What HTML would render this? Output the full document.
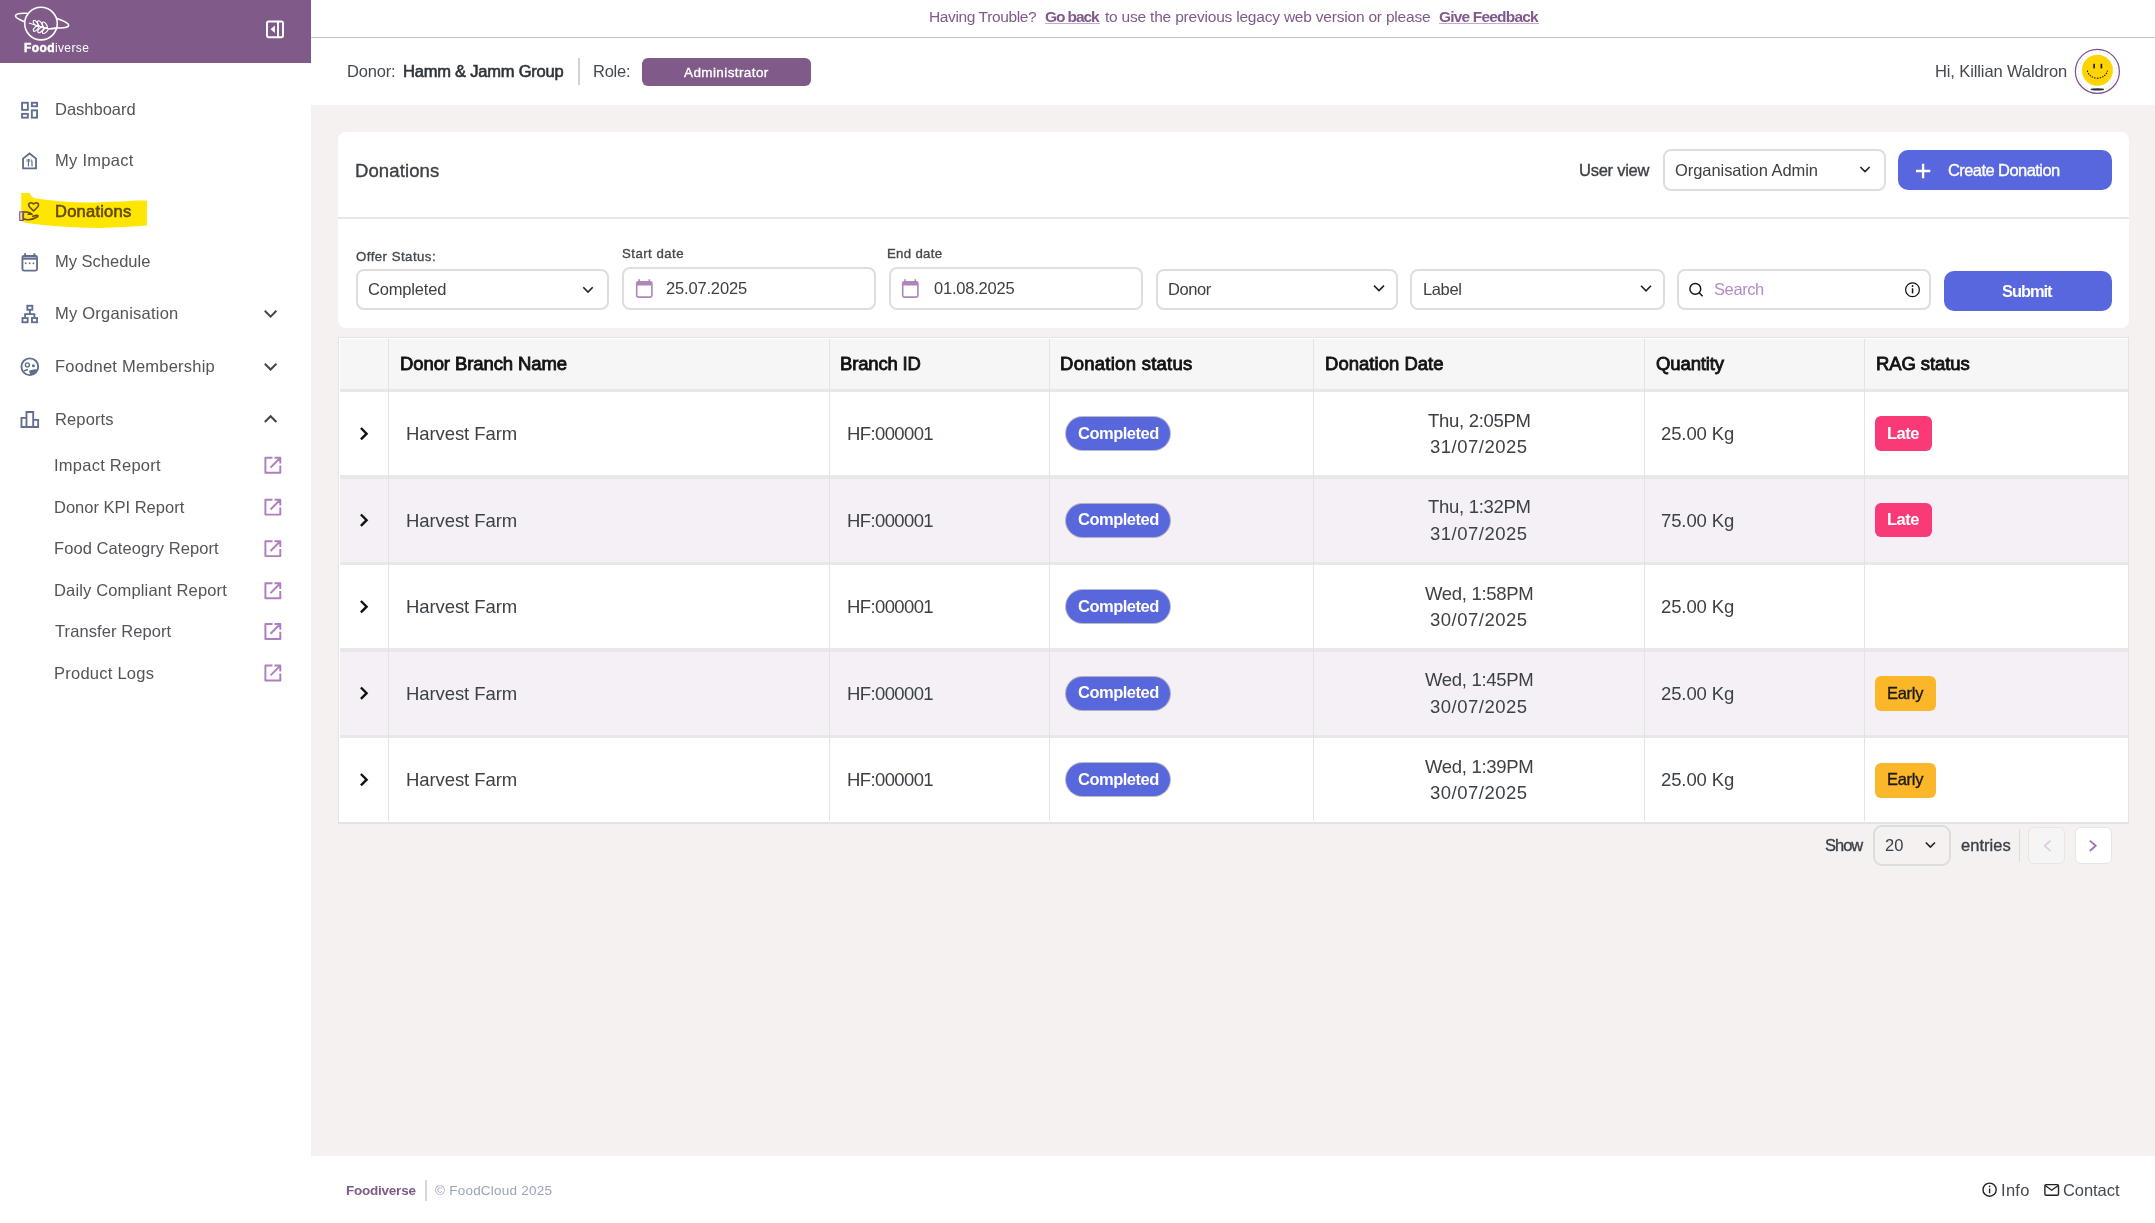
<!DOCTYPE html>
<html><head><meta charset="utf-8">
<style>
*{box-sizing:border-box;margin:0;padding:0}
html,body{width:2155px;height:1223px;overflow:hidden}
body{background:#f6f1f1;font-family:"Liberation Sans",sans-serif;color:#3c4146;position:relative}
.a{position:absolute}
.t{position:absolute;white-space:nowrap;will-change:transform}
.box{position:absolute;border:2px solid #dedede;border-radius:8px;background:#fff}
.btn{position:absolute;background:#5867dd;border-radius:10px}
.vl{position:absolute;width:1px;background:#e3e3e3}
.pill{position:absolute;width:104px;height:33px;border-radius:17px;margin:0.5px 0 0 0.5px;background:#5967dc;box-shadow:0 0 0 1px rgba(60,60,90,.35)}
.late{position:absolute;width:57px;height:34.5px;border-radius:6px;background:#f93a77}
.early{position:absolute;width:61.4px;height:35px;border-radius:6px;background:#fcb62a}
</style></head>
<body>
<!-- sidebar -->
<div class="a" style="left:0;top:0;width:311px;height:1223px;background:#fff"></div>
<div class="a" style="left:0;top:0;width:311px;height:63.3px;background:#805a88"></div>
<!-- topbar -->
<div class="a" style="left:311px;top:0;width:1844px;height:105px;background:#fff"></div>
<div class="a" style="left:311px;top:36.6px;width:1844px;height:1.3px;background:#c4c4c4"></div>
<div class="a" style="left:577.5px;top:58px;width:2px;height:27px;background:#d2d2d2"></div>
<div class="a" style="left:642px;top:57.5px;width:169px;height:28px;border-radius:6px;background:#805a88"></div>
<!-- underlines announcement -->
<div class="a" style="left:1045px;top:23.4px;width:55px;height:1px;background:#c9a6d2"></div>
<div class="a" style="left:1439px;top:23.4px;width:99.5px;height:1px;background:#c9a6d2"></div>
<!-- footer -->
<div class="a" style="left:311px;top:1156.3px;width:1844px;height:67px;background:#fff"></div>
<div class="a" style="left:425px;top:1180px;width:1.5px;height:20.5px;background:#d8d8d8"></div>
<!-- card -->
<div class="a" style="left:338px;top:132px;width:1791px;height:196px;border-radius:8px;background:#fff"></div>
<div class="a" style="left:338px;top:216.8px;width:1791px;height:1.8px;background:#e6e6e6"></div>
<div class="box" style="left:1662.6px;top:149.4px;width:223.4px;height:41.6px"></div>
<div class="btn" style="left:1898px;top:150.4px;width:213.7px;height:39.6px"></div>
<div class="box" style="left:355.6px;top:268.9px;width:253.4px;height:41.6px"></div>
<div class="box" style="left:622px;top:266.7px;width:254.2px;height:43.8px"></div>
<div class="box" style="left:889px;top:266.8px;width:254px;height:43.7px"></div>
<div class="box" style="left:1155.6px;top:268.7px;width:242.2px;height:41.8px"></div>
<div class="box" style="left:1410.3px;top:268.7px;width:254.5px;height:41.8px"></div>
<div class="box" style="left:1677px;top:268.7px;width:254px;height:41.6px"></div>
<div class="btn" style="left:1943.5px;top:271px;width:168.2px;height:39.7px"></div>
<!-- table -->
<div class="a" style="left:338px;top:337px;width:1791px;height:487px;background:#fff;border:1.5px solid #e3e3e3;border-bottom-width:2.5px"></div>
<div class="a" style="left:339.5px;top:338.5px;width:1788px;height:50px;background:#f6f6f6"></div>
<div class="a" style="left:339.5px;top:388.5px;width:1788px;height:3px;background:#e7e7e7"></div>
<div class="a" style="left:339.5px;top:479.2px;width:1788px;height:83.5px;background:#f5f0f6"></div>
<div class="a" style="left:339.5px;top:652.2px;width:1788px;height:83.5px;background:#f5f0f6"></div>
<div class="a" style="left:339.5px;top:475.4px;width:1788px;height:3.6px;background:#e8e8e8"></div>
<div class="a" style="left:339.5px;top:561.9px;width:1788px;height:3.6px;background:#e8e8e8"></div>
<div class="a" style="left:339.5px;top:648.4px;width:1788px;height:3.6px;background:#e8e8e8"></div>
<div class="a" style="left:339.5px;top:734.9px;width:1788px;height:3.6px;background:#e8e8e8"></div>
<div class="vl" style="left:388px;top:338.5px;height:482px"></div>
<div class="vl" style="left:829px;top:338.5px;height:482px"></div>
<div class="vl" style="left:1049px;top:338.5px;height:482px"></div>
<div class="vl" style="left:1313px;top:338.5px;height:482px"></div>
<div class="vl" style="left:1644px;top:338.5px;height:482px"></div>
<div class="vl" style="left:1864px;top:338.5px;height:482px"></div>
<!-- pills -->
<div class="pill" style="left:1065.6px;top:416.5px"></div>
<div class="pill" style="left:1065.6px;top:503px"></div>
<div class="pill" style="left:1065.6px;top:589.5px"></div>
<div class="pill" style="left:1065.6px;top:676px"></div>
<div class="pill" style="left:1065.6px;top:762.5px"></div>
<div class="late" style="left:1874.8px;top:416.4px"></div>
<div class="late" style="left:1874.8px;top:502.9px"></div>
<div class="early" style="left:1874.8px;top:676px"></div>
<div class="early" style="left:1874.8px;top:762.6px"></div>
<!-- pagination -->
<div class="a" style="left:1873.3px;top:825.2px;width:78px;height:41px;border:2.2px solid #dcdcdc;border-radius:9px"></div>
<div class="a" style="left:2019.3px;top:829px;width:1px;height:33px;background:#dddddd"></div>
<div class="a" style="left:2028.3px;top:827px;width:37px;height:36.6px;border:1px solid #e6e6e6;border-radius:6px;background:#f5f5f5"></div>
<div class="a" style="left:2074.6px;top:827px;width:37px;height:36.6px;border:1px solid #e6e6e6;border-radius:6px;background:#fff"></div>
<!-- highlight + icons -->
<svg class="a" style="left:0;top:0" width="2155" height="1223" viewBox="0 0 2155 1223">
<!-- highlight -->
<path d="M21.2 193.1 L29.6 193.1 Q31 197.5 35.8 198.6 Q48 200.5 60.5 201.2 Q80 202.9 99.5 202.2 Q125.5 201.6 135.2 200.6 L146.9 200.6 L146.9 225.6 Q125.5 227.2 100 227.9 Q80 227.9 60.5 226.6 Q34.5 224 25.4 222.7 Q21.2 221.5 21.2 220 Z" fill="#ffe600"/>
<!-- logo -->
<g fill="none" stroke="#fff" stroke-width="1.6">
<ellipse cx="42.1" cy="20.6" rx="27" ry="5.6" transform="rotate(10.5 42.1 20.6)"/>
</g>
<circle cx="41" cy="23.6" r="16.3" fill="#805a88" stroke="#fff" stroke-width="1.6"/>
<path d="M48.5 29 Q53 28.6 57.5 27.9" fill="none" stroke="#fff" stroke-width="1.6"/>
<g fill="none" stroke="#fff" stroke-width="1.1">
<path d="M28.9 23.1 Q36 25.5 49.3 29"/>
<ellipse cx="35.6" cy="23.3" rx="3.4" ry="1.6" transform="rotate(55 35.6 23.3)"/>
<ellipse cx="40" cy="24" rx="3.6" ry="1.7" transform="rotate(55 40 24)"/>
<ellipse cx="44.7" cy="25.2" rx="3.6" ry="1.8" transform="rotate(55 44.7 25.2)"/>
<ellipse cx="36" cy="28.6" rx="3.4" ry="1.6" transform="rotate(-45 36 28.6)"/>
<ellipse cx="40.6" cy="29.8" rx="3.6" ry="1.7" transform="rotate(-45 40.6 29.8)"/>
<ellipse cx="45.2" cy="30.6" rx="3.6" ry="1.7" transform="rotate(-45 45.2 30.6)"/>
</g>
<!-- collapse icon -->
<g fill="none" stroke="#fff" stroke-width="1.95">
<rect x="267" y="21.4" width="16" height="15.8" rx="1.6"/>
<path d="M278 21.4 V37.2"/>
</g>
<path d="M270.6 29.3 L274.9 25.6 L274.9 33 Z" fill="#fff"/>
<!-- nav icons slate -->
<g fill="none" stroke="#5f6e8c" stroke-width="1.85">
<!-- dashboard -->
<rect x="22.05" y="102.75" width="5.8" height="7.1"/>
<rect x="31.85" y="102.75" width="5.2" height="3.5"/>
<rect x="22.05" y="113.85" width="5.8" height="3.8"/>
<rect x="31.85" y="110.35" width="5.2" height="7.3"/>
<!-- house -->
<path d="M23.05 168.35 V158.6 L29.55 153.5 L36.05 158.6 V168.35 Z"/>
<!-- calendar -->
<rect x="22.45" y="255.95" width="14.6" height="14.6" rx="1.5"/>
<path d="M22.45 258.6 H37.05" stroke-width="2.2"/>
<path d="M25.1 253.2 V256 M34.4 253.2 V256"/>
<!-- org -->
<rect x="27.35" y="305.75" width="5" height="4"/>
<path d="M29.85 309.75 V314.1 M25.1 317.2 V314.1 H34.4 V317.2"/>
<rect x="22.45" y="318.05" width="5.2" height="4.2"/>
<rect x="31.95" y="318.05" width="5.1" height="4.2"/>
<!-- foodnet -->
<circle cx="29.8" cy="366.7" r="8.4"/>
<circle cx="27.4" cy="364.9" r="2" stroke-width="1.4"/>
<path d="M23.6 371.2 Q25.6 369.9 28 369.4" stroke-width="1.5"/>
<!-- reports -->
<path d="M21.45 427 V417.85 H26.5 V411.95 H33.2 V419.85 H38.15 V427 Z M26.5 417.85 V427 M33.2 419.85 V427"/>
</g>
<g fill="#5f6e8c">
<circle cx="33.4" cy="365.8" r="1.5"/>
<path d="M29 370.8 Q33 368.6 37.9 369.4 Q36.5 374.2 30.8 375.4 Q29.6 373.5 29 370.8 Z"/>
<rect x="27.85" y="159" width="1.2" height="7.4"/>
<rect x="26.6" y="159" width="0.8" height="3"/>
<rect x="29.4" y="159" width="0.8" height="3"/>
<path d="M31.2 159 Q33 160.5 32.6 163 L32.6 166.4 L31.5 166.4 Z"/>
<rect x="24.9" y="262.5" width="1.6" height="1.6"/>
<rect x="28.8" y="262.5" width="1.6" height="1.6"/>
<rect x="32.6" y="262.5" width="1.6" height="1.6"/>
</g>
<!-- donations hand icon -->
<g fill="none" stroke="#6b4a00" stroke-width="1.6" stroke-linejoin="round">
<path d="M33.6 211 L29.6 207 Q27.7 204.6 29.6 203.2 Q31.7 201.9 33.6 204 Q35.5 201.9 37.6 203.2 Q39.5 204.6 37.6 207 Z"/>
<path d="M23.3 212 H27 Q30.5 212.5 32 214.3 H27.5 M23.3 218.8 Q30 221.5 37.5 216.8 Q38.8 215.2 36.5 215.2 L32 216.5"/>
<path d="M23.3 211.5 V220"/>
</g>
<rect x="19.8" y="211.8" width="3.3" height="8.6" fill="none" stroke="#7a4fb0" stroke-width="1.2"/>
<!-- chevrons sidebar -->
<g fill="none" stroke="#454545" stroke-width="2">
<path d="M264.8 310.8 L270.6 316.6 L276.4 310.8"/>
<path d="M264.8 363.7 L270.6 369.5 L276.4 363.7"/>
<path d="M264.8 422 L270.6 416.2 L276.4 422"/>
</g>
<!-- external link icons -->
<g fill="none" stroke="#b07ec0" stroke-width="1.95" stroke-linejoin="round">
<path d="M272.5 457.8 H265.4 V472.7 H280.3 V465.6 M274.5 457.8 H280.3 V463.6 M280.3 457.8 L270.5 467.6" transform="translate(0,0)"/>
<path d="M272.5 457.8 H265.4 V472.7 H280.3 V465.6 M274.5 457.8 H280.3 V463.6 M280.3 457.8 L270.5 467.6" transform="translate(0,41.9)"/>
<path d="M272.5 457.8 H265.4 V472.7 H280.3 V465.6 M274.5 457.8 H280.3 V463.6 M280.3 457.8 L270.5 467.6" transform="translate(0,83.4)"/>
<path d="M272.5 457.8 H265.4 V472.7 H280.3 V465.6 M274.5 457.8 H280.3 V463.6 M280.3 457.8 L270.5 467.6" transform="translate(0,125.5)"/>
<path d="M272.5 457.8 H265.4 V472.7 H280.3 V465.6 M274.5 457.8 H280.3 V463.6 M280.3 457.8 L270.5 467.6" transform="translate(0,166.2)"/>
<path d="M272.5 457.8 H265.4 V472.7 H280.3 V465.6 M274.5 457.8 H280.3 V463.6 M280.3 457.8 L270.5 467.6" transform="translate(0,207.8)"/>
</g>
<!-- avatar -->
<circle cx="2097.4" cy="71.4" r="22" fill="#fff" stroke="#7b4e8a" stroke-width="1.2"/>
<circle cx="2097.4" cy="71.4" r="19.3" fill="none" stroke="#e6dcea" stroke-width="0.8" stroke-dasharray="2 2"/>
<circle cx="2097.4" cy="70.3" r="15.5" fill="#ffd400"/>
<ellipse cx="2097.4" cy="89.4" rx="6.8" ry="1.1" fill="#2a2f3a"/>
<g fill="#111"><rect x="2093.3" y="63.8" width="1.6" height="4.6"/><rect x="2100.6" y="63.8" width="1.6" height="4.6"/></g>
<path d="M2087.3 70.6 Q2089 77.5 2097.4 78.3 Q2105.8 77.5 2107.5 70.6" fill="none" stroke="#111" stroke-width="1.1" stroke-dasharray="1.4 1.2"/>
<!-- form chevrons -->
<g fill="none" stroke="#222" stroke-width="1.6">
<path d="M583.3 287.2 L588 292 L592.7 287.2"/>
<path d="M1374 285.6 L1379 290.6 L1384 285.6"/>
<path d="M1641 285.8 L1646 290.8 L1651 285.8"/>
<path d="M1860.4 167 L1865 171.6 L1869.6 167"/>
<path d="M1925.8 842.5 L1930.4 847.1 L1935 842.5"/>
</g>
<!-- calendar lavender -->
<g fill="none" stroke="#ae85ba" stroke-width="1.6">
<rect x="636.7" y="281.9" width="15.2" height="15.2" rx="1.6"/>
<rect x="902.7" y="281.9" width="15.2" height="15.2" rx="1.6"/>
<path d="M639.1 279.2 V282 M649.3 279.2 V282 M905.1 279.2 V282 M915.3 279.2 V282"/>
</g>
<g fill="#ae85ba"><rect x="636.7" y="281.9" width="15.2" height="3.6"/><rect x="902.7" y="281.9" width="15.2" height="3.6"/></g>
<!-- search & info -->
<g fill="none" stroke="#111" stroke-width="1.45">
<circle cx="1695.3" cy="288.9" r="5.4"/>
<path d="M1699.2 292.8 L1702.6 296.2"/>
<circle cx="1912.5" cy="289.7" r="6.9" stroke-width="1.2"/>
</g>
<g fill="#111"><rect x="1911.8" y="288.3" width="1.5" height="5"/><circle cx="1912.55" cy="286" r="0.9"/></g>
<!-- plus -->
<path d="M1923.1 163.8 V178.2 M1915.9 171 H1930.3" stroke="#fff" stroke-width="2.4" fill="none"/>
<!-- table chevrons -->
<g fill="none" stroke="#111" stroke-width="2.4">
<path d="M360.9 428 L366.6 433.7 L360.9 439.4"/>
<path d="M360.9 428 L366.6 433.7 L360.9 439.4" transform="translate(0,86.5)"/>
<path d="M360.9 428 L366.6 433.7 L360.9 439.4" transform="translate(0,173)"/>
<path d="M360.9 428 L366.6 433.7 L360.9 439.4" transform="translate(0,259.5)"/>
<path d="M360.9 428 L366.6 433.7 L360.9 439.4" transform="translate(0,346)"/>
</g>
<!-- pagination chevrons -->
<path d="M2050.5 840.6 L2044.6 845.8 L2050.5 851" fill="none" stroke="#dcc8e2" stroke-width="1.6"/>
<path d="M2089.8 840.6 L2095.7 845.8 L2089.8 851" fill="none" stroke="#a46fb5" stroke-width="1.8"/>
<!-- footer icons -->
<g fill="none" stroke="#222" stroke-width="1.4">
<circle cx="1989.6" cy="1189.7" r="6.6"/>
<rect x="2044.9" y="1184.6" width="13.6" height="10.6" rx="1.2"/>
<path d="M2045.2 1185.5 L2051.7 1190.2 L2058.2 1185.5"/>
</g>
<g fill="#222"><rect x="1988.9" y="1188.5" width="1.4" height="4.8"/><circle cx="1989.6" cy="1186.3" r="0.85"/></g>
</svg>

<div class="t" style="left:54.60px;top:100.97px;font-size:16.5px;line-height:16.5px;font-weight:400;color:#515459;letter-spacing:-0.012px">Dashboard</div>
<div class="t" style="left:54.60px;top:152.07px;font-size:16.5px;line-height:16.5px;font-weight:400;color:#515459;letter-spacing:0.275px">My Impact</div>
<div class="t" style="left:54.60px;top:202.78px;font-size:16.5px;line-height:16.5px;font-weight:400;-webkit-text-stroke:0.6px currentColor;color:#634900;letter-spacing:0.238px">Donations</div>
<div class="t" style="left:54.60px;top:253.08px;font-size:16.5px;line-height:16.5px;font-weight:400;color:#515459">My Schedule</div>
<div class="t" style="left:54.60px;top:304.98px;font-size:16.5px;line-height:16.5px;font-weight:400;color:#515459;letter-spacing:0.221px">My Organisation</div>
<div class="t" style="left:54.60px;top:357.58px;font-size:16.5px;line-height:16.5px;font-weight:400;color:#515459;letter-spacing:0.224px">Foodnet Membership</div>
<div class="t" style="left:54.60px;top:410.98px;font-size:16.5px;line-height:16.5px;font-weight:400;color:#515459;letter-spacing:0.133px">Reports</div>
<div class="t" style="left:54.00px;top:456.78px;font-size:16.5px;line-height:16.5px;font-weight:400;color:#515459;letter-spacing:0.250px">Impact Report</div>
<div class="t" style="left:54.00px;top:498.68px;font-size:16.5px;line-height:16.5px;font-weight:400;color:#515459">Donor KPI Report</div>
<div class="t" style="left:54.00px;top:540.18px;font-size:16.5px;line-height:16.5px;font-weight:400;color:#515459;letter-spacing:0.074px">Food Cateogry Report</div>
<div class="t" style="left:54.00px;top:582.27px;font-size:16.5px;line-height:16.5px;font-weight:400;color:#515459;letter-spacing:0.148px">Daily Compliant Report</div>
<div class="t" style="left:55.00px;top:622.98px;font-size:16.5px;line-height:16.5px;font-weight:400;color:#515459;letter-spacing:0.086px">Transfer Report</div>
<div class="t" style="left:54.00px;top:664.58px;font-size:16.5px;line-height:16.5px;font-weight:400;color:#515459;letter-spacing:0.245px">Product Logs</div>
<div class="t" style="left:24.00px;top:41.70px;font-size:12px;line-height:12px;font-weight:400;color:#fff;letter-spacing:0.389px"><b style="font-weight:700;-webkit-text-stroke:0.5px #fff">Food</b>iverse</div>
<div class="t" style="left:928.70px;top:9.13px;font-size:15.5px;line-height:15.5px;font-weight:400;color:#80598a;letter-spacing:-0.379px">Having Trouble?</div>
<div class="t" style="left:1045.20px;top:9.13px;font-size:15.5px;line-height:15.5px;font-weight:700;color:#80598a;letter-spacing:-1.083px">Go back</div>
<div class="t" style="left:1104.60px;top:9.13px;font-size:15.5px;line-height:15.5px;font-weight:400;color:#80598a;letter-spacing:-0.204px">to use the previous legacy web version or please</div>
<div class="t" style="left:1439.00px;top:9.13px;font-size:15.5px;line-height:15.5px;font-weight:700;color:#80598a;letter-spacing:-0.817px">Give Feedback</div>
<div class="t" style="left:346.80px;top:62.98px;font-size:16.5px;line-height:16.5px;font-weight:400;color:#44494e;letter-spacing:-0.200px">Donor:</div>
<div class="t" style="left:403.40px;top:62.98px;font-size:16.5px;line-height:16.5px;font-weight:400;-webkit-text-stroke:0.6px currentColor;color:#2f3337;letter-spacing:-0.219px">Hamm &amp; Jamm Group</div>
<div class="t" style="left:593.00px;top:62.98px;font-size:16.5px;line-height:16.5px;font-weight:400;color:#44494e;letter-spacing:-0.250px">Role:</div>
<div class="t" style="left:683.70px;top:66.03px;font-size:13.5px;line-height:13.5px;font-weight:400;-webkit-text-stroke:0.35px currentColor;color:#fff;letter-spacing:0.400px">Administrator</div>
<div class="t" style="left:1935.40px;top:63.27px;font-size:16.5px;line-height:16.5px;font-weight:400;color:#44494e;letter-spacing:-0.111px">Hi, Killian Waldron</div>
<div class="t" style="left:354.50px;top:162.08px;font-size:18.5px;line-height:18.5px;font-weight:400;-webkit-text-stroke:0.35px currentColor;color:#3c4146;letter-spacing:0.112px">Donations</div>
<div class="t" style="left:1579.00px;top:162.38px;font-size:16.5px;line-height:16.5px;font-weight:400;-webkit-text-stroke:0.35px currentColor;color:#3c4146;letter-spacing:-0.250px">User view</div>
<div class="t" style="left:1674.70px;top:162.38px;font-size:16.5px;line-height:16.5px;font-weight:400;color:#3c4146;letter-spacing:-0.059px">Organisation Admin</div>
<div class="t" style="left:1948.00px;top:162.38px;font-size:16.5px;line-height:16.5px;font-weight:400;-webkit-text-stroke:0.35px currentColor;color:#fff;letter-spacing:-0.571px">Create Donation</div>
<div class="t" style="left:355.60px;top:249.98px;font-size:13.2px;line-height:13.2px;font-weight:400;-webkit-text-stroke:0.35px currentColor;color:#44494e;letter-spacing:0.483px">Offer Status:</div>
<div class="t" style="left:622.00px;top:246.78px;font-size:13.2px;line-height:13.2px;font-weight:400;-webkit-text-stroke:0.35px currentColor;color:#44494e;letter-spacing:0.478px">Start date</div>
<div class="t" style="left:887.40px;top:246.88px;font-size:13.2px;line-height:13.2px;font-weight:400;-webkit-text-stroke:0.35px currentColor;color:#44494e;letter-spacing:0.314px">End date</div>
<div class="t" style="left:368.00px;top:280.88px;font-size:16.5px;line-height:16.5px;font-weight:400;color:#3c4146;letter-spacing:-0.175px">Completed</div>
<div class="t" style="left:666.00px;top:279.58px;font-size:16.5px;line-height:16.5px;font-weight:400;color:#3c4146;letter-spacing:-0.167px">25.07.2025</div>
<div class="t" style="left:933.50px;top:280.28px;font-size:16.5px;line-height:16.5px;font-weight:400;color:#3c4146;letter-spacing:-0.211px">01.08.2025</div>
<div class="t" style="left:1168.00px;top:281.18px;font-size:16.5px;line-height:16.5px;font-weight:400;color:#3c4146;letter-spacing:-0.425px">Donor</div>
<div class="t" style="left:1423.30px;top:281.18px;font-size:16.5px;line-height:16.5px;font-weight:400;color:#3c4146;letter-spacing:-0.375px">Label</div>
<div class="t" style="left:1713.60px;top:280.98px;font-size:16.5px;line-height:16.5px;font-weight:400;color:#b48ac6;letter-spacing:-0.400px">Search</div>
<div class="t" style="left:2002.40px;top:283.48px;font-size:16.5px;line-height:16.5px;font-weight:700;color:#fff;letter-spacing:-1.080px">Submit</div>
<div class="t" style="left:400.00px;top:354.97px;font-size:18.5px;line-height:18.5px;font-weight:400;-webkit-text-stroke:0.85px currentColor;color:#111316;letter-spacing:-0.094px">Donor Branch Name</div>
<div class="t" style="left:839.90px;top:354.97px;font-size:18.5px;line-height:18.5px;font-weight:400;-webkit-text-stroke:0.85px currentColor;color:#111316;letter-spacing:-0.162px">Branch ID</div>
<div class="t" style="left:1060.40px;top:354.97px;font-size:18.5px;line-height:18.5px;font-weight:400;-webkit-text-stroke:0.85px currentColor;color:#111316;letter-spacing:0.271px">Donation status</div>
<div class="t" style="left:1324.50px;top:354.97px;font-size:18.5px;line-height:18.5px;font-weight:400;-webkit-text-stroke:0.85px currentColor;color:#111316;letter-spacing:0.025px">Donation Date</div>
<div class="t" style="left:1656.30px;top:354.97px;font-size:18.5px;line-height:18.5px;font-weight:400;-webkit-text-stroke:0.85px currentColor;color:#111316;letter-spacing:-0.114px">Quantity</div>
<div class="t" style="left:1875.50px;top:354.97px;font-size:18.5px;line-height:18.5px;font-weight:400;-webkit-text-stroke:0.85px currentColor;color:#111316;letter-spacing:-0.100px">RAG status</div>
<div class="t" style="left:405.80px;top:425.07px;font-size:18.5px;line-height:18.5px;font-weight:400;color:#3c4146;letter-spacing:-0.082px">Harvest Farm</div>
<div class="t" style="left:846.80px;top:425.07px;font-size:18.5px;line-height:18.5px;font-weight:400;color:#3c4146;letter-spacing:-0.612px">HF:000001</div>
<div class="t" style="left:1078.10px;top:424.78px;font-size:16.5px;line-height:16.5px;font-weight:700;color:#fff;letter-spacing:-0.500px">Completed</div>
<div class="t" style="left:1427.90px;top:411.97px;font-size:18.5px;line-height:18.5px;font-weight:400;color:#3c4146;letter-spacing:-0.300px">Thu, 2:05PM</div>
<div class="t" style="left:1430.25px;top:438.47px;font-size:18.5px;line-height:18.5px;font-weight:400;color:#3c4146;letter-spacing:0.500px">31/07/2025</div>
<div class="t" style="left:1661.30px;top:425.07px;font-size:18.5px;line-height:18.5px;font-weight:400;color:#3c4146;letter-spacing:-0.114px">25.00 Kg</div>
<div class="t" style="left:1886.80px;top:424.78px;font-size:16.5px;line-height:16.5px;font-weight:700;color:#fff;letter-spacing:-0.467px">Late</div>
<div class="t" style="left:405.80px;top:511.57px;font-size:18.5px;line-height:18.5px;font-weight:400;color:#3c4146;letter-spacing:-0.082px">Harvest Farm</div>
<div class="t" style="left:846.80px;top:511.57px;font-size:18.5px;line-height:18.5px;font-weight:400;color:#3c4146;letter-spacing:-0.612px">HF:000001</div>
<div class="t" style="left:1078.10px;top:511.27px;font-size:16.5px;line-height:16.5px;font-weight:700;color:#fff;letter-spacing:-0.500px">Completed</div>
<div class="t" style="left:1427.90px;top:498.47px;font-size:18.5px;line-height:18.5px;font-weight:400;color:#3c4146;letter-spacing:-0.300px">Thu, 1:32PM</div>
<div class="t" style="left:1430.25px;top:524.97px;font-size:18.5px;line-height:18.5px;font-weight:400;color:#3c4146;letter-spacing:0.500px">31/07/2025</div>
<div class="t" style="left:1661.30px;top:511.57px;font-size:18.5px;line-height:18.5px;font-weight:400;color:#3c4146;letter-spacing:-0.114px">75.00 Kg</div>
<div class="t" style="left:1886.80px;top:511.27px;font-size:16.5px;line-height:16.5px;font-weight:700;color:#fff;letter-spacing:-0.467px">Late</div>
<div class="t" style="left:405.80px;top:598.07px;font-size:18.5px;line-height:18.5px;font-weight:400;color:#3c4146;letter-spacing:-0.082px">Harvest Farm</div>
<div class="t" style="left:846.80px;top:598.07px;font-size:18.5px;line-height:18.5px;font-weight:400;color:#3c4146;letter-spacing:-0.612px">HF:000001</div>
<div class="t" style="left:1078.10px;top:597.77px;font-size:16.5px;line-height:16.5px;font-weight:700;color:#fff;letter-spacing:-0.500px">Completed</div>
<div class="t" style="left:1425.40px;top:584.97px;font-size:18.5px;line-height:18.5px;font-weight:400;color:#3c4146;letter-spacing:-0.300px">Wed, 1:58PM</div>
<div class="t" style="left:1430.25px;top:611.47px;font-size:18.5px;line-height:18.5px;font-weight:400;color:#3c4146;letter-spacing:0.500px">30/07/2025</div>
<div class="t" style="left:1661.30px;top:598.07px;font-size:18.5px;line-height:18.5px;font-weight:400;color:#3c4146;letter-spacing:-0.114px">25.00 Kg</div>
<div class="t" style="left:405.80px;top:684.57px;font-size:18.5px;line-height:18.5px;font-weight:400;color:#3c4146;letter-spacing:-0.082px">Harvest Farm</div>
<div class="t" style="left:846.80px;top:684.57px;font-size:18.5px;line-height:18.5px;font-weight:400;color:#3c4146;letter-spacing:-0.612px">HF:000001</div>
<div class="t" style="left:1078.10px;top:684.27px;font-size:16.5px;line-height:16.5px;font-weight:700;color:#fff;letter-spacing:-0.500px">Completed</div>
<div class="t" style="left:1425.40px;top:671.47px;font-size:18.5px;line-height:18.5px;font-weight:400;color:#3c4146;letter-spacing:-0.300px">Wed, 1:45PM</div>
<div class="t" style="left:1430.25px;top:697.97px;font-size:18.5px;line-height:18.5px;font-weight:400;color:#3c4146;letter-spacing:0.500px">30/07/2025</div>
<div class="t" style="left:1661.30px;top:684.57px;font-size:18.5px;line-height:18.5px;font-weight:400;color:#3c4146;letter-spacing:-0.114px">25.00 Kg</div>
<div class="t" style="left:1886.70px;top:684.77px;font-size:16.5px;line-height:16.5px;font-weight:400;-webkit-text-stroke:0.35px currentColor;color:#1a1a1a;letter-spacing:-0.300px">Early</div>
<div class="t" style="left:405.80px;top:771.07px;font-size:18.5px;line-height:18.5px;font-weight:400;color:#3c4146;letter-spacing:-0.082px">Harvest Farm</div>
<div class="t" style="left:846.80px;top:771.07px;font-size:18.5px;line-height:18.5px;font-weight:400;color:#3c4146;letter-spacing:-0.612px">HF:000001</div>
<div class="t" style="left:1078.10px;top:770.77px;font-size:16.5px;line-height:16.5px;font-weight:700;color:#fff;letter-spacing:-0.500px">Completed</div>
<div class="t" style="left:1425.40px;top:757.97px;font-size:18.5px;line-height:18.5px;font-weight:400;color:#3c4146;letter-spacing:-0.300px">Wed, 1:39PM</div>
<div class="t" style="left:1430.25px;top:784.47px;font-size:18.5px;line-height:18.5px;font-weight:400;color:#3c4146;letter-spacing:0.500px">30/07/2025</div>
<div class="t" style="left:1661.30px;top:771.07px;font-size:18.5px;line-height:18.5px;font-weight:400;color:#3c4146;letter-spacing:-0.114px">25.00 Kg</div>
<div class="t" style="left:1886.70px;top:771.27px;font-size:16.5px;line-height:16.5px;font-weight:400;-webkit-text-stroke:0.35px currentColor;color:#1a1a1a;letter-spacing:-0.300px">Early</div>
<div class="t" style="left:1824.90px;top:836.68px;font-size:16.5px;line-height:16.5px;font-weight:400;-webkit-text-stroke:0.35px currentColor;color:#3c4146;letter-spacing:-1.000px">Show</div>
<div class="t" style="left:1885.30px;top:836.68px;font-size:16.5px;line-height:16.5px;font-weight:400;color:#3c4146">20</div>
<div class="t" style="left:1960.80px;top:836.68px;font-size:16.5px;line-height:16.5px;font-weight:400;-webkit-text-stroke:0.35px currentColor;color:#3c4146;letter-spacing:0.033px">entries</div>
<div class="t" style="left:346.40px;top:1183.73px;font-size:13.5px;line-height:13.5px;font-weight:700;color:#7f5a87;letter-spacing:-0.233px">Foodiverse</div>
<div class="t" style="left:434.90px;top:1183.73px;font-size:13.5px;line-height:13.5px;font-weight:400;color:#9aa3bb;letter-spacing:0.233px">&copy; FoodCloud 2025</div>
<div class="t" style="left:2000.80px;top:1181.57px;font-size:16.5px;line-height:16.5px;font-weight:400;color:#44494e;letter-spacing:0.300px">Info</div>
<div class="t" style="left:2062.90px;top:1181.57px;font-size:16.5px;line-height:16.5px;font-weight:400;color:#44494e;letter-spacing:-0.067px">Contact</div>
</body></html>
